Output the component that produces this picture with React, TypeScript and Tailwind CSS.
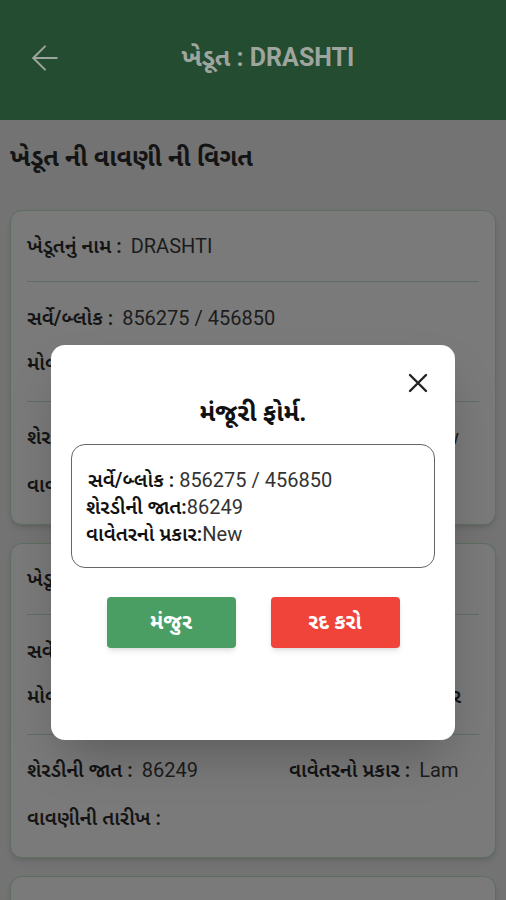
import { ArrowLeft } from "lucide-react";

const guj = "font-['Roboto','Noto_Sans_Gujarati','Noto_Sans',sans-serif]";

interface Farmer {
  name: string;
  survey: string;
  mobile: string;
  village: string;
  variety: string;
  plantType: string;
}

const farmers: Farmer[] = [
  { name: "DRASHTI", survey: "856275 / 456850", mobile: "9876543210", village: "", variety: "86249", plantType: "New" },
  { name: "DRASHTI", survey: "856275 / 456850", mobile: "9876543210", village: "તાલુકો : સુરેન્દ્રનગર", variety: "86249", plantType: "Lam" },
  { name: "DRASHTI", survey: "856275 / 456850", mobile: "9876543210", village: "", variety: "86249", plantType: "New" },
];

// page sits under the dialog's scrim, so colours here are the dimmed ones
function Field({ label, value }: { label: string; value: string }) {
  return (
    <p className="whitespace-nowrap text-[20px] leading-none text-[#141414]">
      <span className="font-semibold">{label} : </span>
      <span className="ml-1 text-[#1c1c1c]">{value}</span>
    </p>
  );
}

function FarmerCard({ farmer }: { farmer: Farmer }) {
  return (
    <div className="rounded-xl border border-[#5c6f60] bg-[#7a7a7a] px-4 shadow-md">
      <div className="py-[25px]">
        <Field label="ખેડૂતનું નામ" value={farmer.name} />
      </div>
      <div className="h-px bg-[#5f6d62]" />
      <div className="pt-[26px]">
        <Field label="સર્વે/બ્લોક" value={farmer.survey} />
      </div>
      <div className="flex pt-[25px] pb-[28px]">
        <div className="w-[262px]">
          <Field label="મોબાઈલ નંબર" value={farmer.mobile} />
        </div>
        <p className="ml-auto whitespace-nowrap pr-[18px] text-[20px] leading-none font-semibold text-[#141414]">{farmer.village}</p>
      </div>
      <div className="h-px bg-[#5f6d62]" />
      <div className="flex pt-[25px]">
        <div className="w-[262px]">
          <Field label="શેરડીની જાત" value={farmer.variety} />
        </div>
        <Field label="વાવેતરનો પ્રકાર" value={farmer.plantType} />
      </div>
      <div className="pt-[28px] pb-[29px]">
        <p className="text-[20px] leading-none font-semibold text-[#141414]">વાવણીની તારીખ :</p>
      </div>
    </div>
  );
}

export default function App() {
  return (
    <div className={`relative h-[900px] overflow-hidden bg-[#737373] ${guj}`}>
      <header className="flex h-[120px] items-center bg-[#234c30] px-[25px] pb-[4px]">
        <ArrowLeft size={40} strokeWidth={1.2} className="text-[#9ea59e]" />
        <h1 className="flex-1 pr-[10px] text-center text-[25px] font-bold text-[#9ea59e]">ખેડૂત : DRASHTI</h1>
      </header>

      <main className="px-[10px]">
        <h2 className="pt-[25px] pb-[40px] text-[25px] font-bold leading-none text-[#141414]">ખેડૂત ની વાવણી ની વિગત</h2>
        <div className="space-y-[18px]">
          {farmers.map((f, i) => (
            <FarmerCard key={i} farmer={f} />
          ))}
        </div>
      </main>

      <div className="absolute inset-0">
        <div className="mx-auto mt-[345px] h-[395px] w-[404px] rounded-[14px] bg-white px-5 pt-[28px] shadow-2xl">
          <div className="flex h-[20px] justify-end pr-[7px]">
            <svg width="20" height="20" viewBox="0 0 20 20" fill="none" stroke="#222" strokeWidth="2.4" strokeLinecap="round">
              <path d="M2 2 18 18M18 2 2 18" />
            </svg>
          </div>
          <h3 className="mt-[7px] text-center text-[25px] font-bold leading-none text-[#111]">મંજૂરી ફોર્મ.</h3>
          <div className="mt-[19px] h-[124px] rounded-[14px] border border-[#666] px-[14px] pt-[22px] text-[20px] leading-[27px] text-[#111]">
            <p className="pl-[2px]">
              <span className="font-semibold">સર્વે/બ્લોક : </span>
              <span className="text-[#333]">856275 / 456850</span>
            </p>
            <p>
              <span className="font-semibold">શેરડીની જાત:</span>
              <span className="text-[#333]">86249</span>
            </p>
            <p>
              <span className="font-semibold">વાવેતરનો પ્રકાર:</span>
              <span className="text-[#333]">New</span>
            </p>
          </div>
          <div className="mt-[29px] flex justify-center gap-[35px]">
            <button className="h-[51px] w-[129px] rounded-[4px] bg-[#4a9e64] text-[21px] font-bold text-white shadow-md">મંજુર</button>
            <button className="h-[51px] w-[129px] rounded-[4px] bg-[#f0433a] text-[21px] font-bold text-white shadow-md">રદ કરો</button>
          </div>
        </div>
      </div>
    </div>
  );
}
